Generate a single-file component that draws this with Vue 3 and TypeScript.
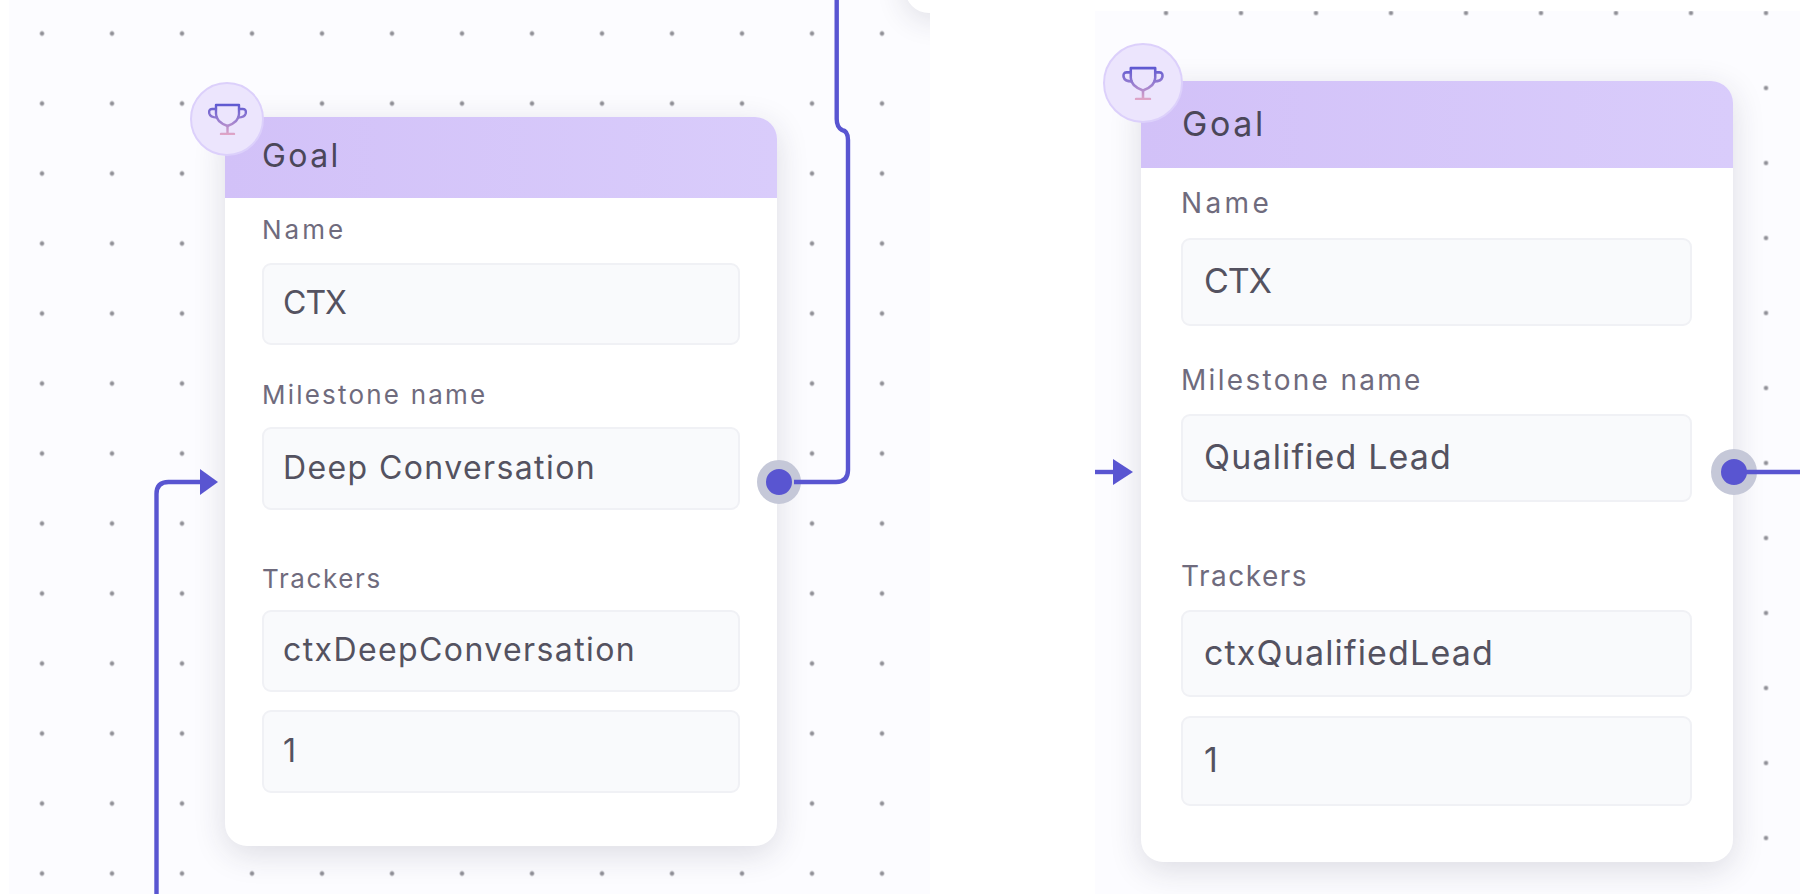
<script setup lang="ts">
interface GoalNode {
  id: string
  milestone: string
  tracker: string
}

const nodes: GoalNode[] = [
  { id: 'left', milestone: 'Deep Conversation', tracker: 'ctxDeepConversation' },
  { id: 'right', milestone: 'Qualified Lead', tracker: 'ctxQualifiedLead' },
]
</script>

<template>
  <main class="page">
    <section
      v-for="node in nodes"
      :key="node.id"
      class="canvas"
      :class="`canvas-${node.id}`"
    >
      <div v-if="node.id === 'left'" class="peek-node"></div>

      <svg class="wires" xmlns="http://www.w3.org/2000/svg">
        <template v-if="node.id === 'left'">
          <path class="wire" d="M827.7 0V119Q827.7 127 833 130Q839 131 839 140V470Q839 482 827 482H785" />
          <path class="wire" d="M147.5 894V494Q147.5 482 159.5 482H195" />
          <polygon class="arrow" points="191,469 209,482 191,495" />
        </template>
        <template v-else>
          <path class="wire" d="M0 461H22" />
          <polygon class="arrow" points="18,448 38,461 18,474" />
          <path class="wire" d="M650 461H705" />
        </template>
      </svg>

      <article class="card">
        <div class="badge">
          <svg class="trophy" viewBox="0 0 39 32" fill="none" xmlns="http://www.w3.org/2000/svg">
            <defs>
              <linearGradient :id="`cup-${node.id}`" x1="0" y1="0" x2="0" y2="32" gradientUnits="userSpaceOnUse">
                <stop offset="0" stop-color="#5955d1" />
                <stop offset="0.55" stop-color="#9a7fd0" />
                <stop offset="1" stop-color="#e2a6c6" />
              </linearGradient>
            </defs>
            <g :stroke="`url(#cup-${node.id})`" stroke-width="2.4" stroke-linecap="round" stroke-linejoin="round">
              <path d="M8 2H31V11C31 18 25 21 19.5 23C14 21 8 18 8 11Z" />
              <path d="M8 6H4C1.500 6 0.800 8 1.300 10.500C2 13.500 5 14.500 9 14.500" />
              <path d="M31 6H35C37.500 6 38.200 8 37.700 10.500C37 13.500 34 14.500 30 14.500" />
              <path d="M19.5 23V30" />
              <path d="M13 31H26" />
            </g>
          </svg>
        </div>

        <header class="card-head">Goal</header>

        <div class="card-body">
          <label class="label label-name">Name</label>
          <div class="value value-name">CTX</div>
          <label class="label label-milestone">Milestone name</label>
          <div class="value value-milestone">{{ node.milestone }}</div>
          <label class="label label-trackers">Trackers</label>
          <div class="value value-tracker">{{ node.tracker }}</div>
          <div class="value value-count">1</div>
        </div>

        <span class="handle"></span>
      </article>
    </section>
  </main>
</template>

<style scoped>
.page {
  display: flex;
  align-items: flex-start;
  width: 1800px;
  height: 894px;
  overflow: hidden;
  background: #ffffff;
  font-family: Inter, "Liberation Sans", sans-serif;
}

.canvas {
  position: relative;
  flex: none;
  overflow: hidden;
  background-color: #fcfcff;
  background-image: radial-gradient(circle, #8f8f96 0, #8f8f96 1.3px, rgba(143, 143, 150, 0) 3px);
}

.canvas-left {
  width: 921px;
  height: 894px;
  margin-left: 9px;
  background-size: 70px 70px;
  background-position: -2px -1.5px;
}

.canvas-right {
  width: 705px;
  height: 883px;
  margin-top: 11px;
  margin-left: 165px;
  background-size: 75px 75px;
  background-position: 33.5px -35.5px;
}

.peek-node {
  position: absolute;
  left: 896px;
  top: -87px;
  width: 120px;
  height: 100px;
  background: #ffffff;
  border-radius: 24px;
  box-shadow: 0 6px 30px rgba(40, 40, 70, 0.14);
}

.wires {
  position: absolute;
  inset: 0;
  width: 100%;
  height: 100%;
  z-index: 2;
}

.wire {
  fill: none;
  stroke: #5955d1;
  stroke-width: 4.4;
}

.arrow {
  fill: #5955d1;
}

.card {
  position: absolute;
  z-index: 1;
  display: flex;
  flex-direction: column;
  background: #ffffff;
  border-radius: 22px;
  box-shadow: 0 8px 32px rgba(40, 40, 70, 0.15);
}

.canvas-left .card {
  left: 216px;
  top: 117px;
  width: 552px;
  height: 729px;
}

.canvas-right .card {
  left: 46px;
  top: 70px;
  width: 592px;
  height: 781px;
}

.card-head {
  display: flex;
  align-items: center;
  border-radius: 22px 22px 0 0;
  background: linear-gradient(90deg, #d2c1f8 0%, #d9ccfb 100%);
  color: #4b4759;
  box-sizing: border-box;
}

.canvas-left .card-head {
  height: 81px;
  padding: 0 0 5px 37px;
  font-size: 32px;
  letter-spacing: 2.4px;
}

.canvas-right .card-head {
  height: 87px;
  padding: 0 0 3px 41px;
  font-size: 34px;
  letter-spacing: 2.6px;
}

.card-body {
  display: flex;
  flex-direction: column;
}

.canvas-left .card-body {
  padding: 0 37px 0 37px;
}

.canvas-right .card-body {
  padding: 0 41px 0 40px;
}

.label {
  display: block;
  height: 30px;
  line-height: 30px;
  color: #6f6b7d;
}

.canvas-left .label {
  font-size: 26px;
}

.canvas-right .label {
  font-size: 28px;
}

.canvas-left .label-name { letter-spacing: 3px; }
.canvas-left .label-milestone { letter-spacing: 2.2px; }
.canvas-left .label-trackers { letter-spacing: 1.6px; }
.canvas-right .label-name { letter-spacing: 3.4px; }
.canvas-right .label-milestone { letter-spacing: 2.3px; }
.canvas-right .label-trackers { letter-spacing: 1.5px; }

.value {
  display: flex;
  align-items: center;
  box-sizing: border-box;
  background: #f9fafc;
  border: 2px solid #f0f1f5;
  border-radius: 9px;
  color: #545260;
}

.canvas-left .value {
  padding: 0 0 3px 19px;
  font-size: 32px;
  letter-spacing: 1.4px;
}

.canvas-right .value {
  padding: 0 0 3px 21px;
  font-size: 34px;
  letter-spacing: 1.15px;
}

.canvas-left .value-name { letter-spacing: -1px; }
.canvas-right .value-name { letter-spacing: -1px; }

/* left node spacing */
.canvas-left .label-name { margin-top: 17px; }
.canvas-left .value-name { margin-top: 18px; height: 82px; }
.canvas-left .label-milestone { margin-top: 35px; }
.canvas-left .value-milestone { margin-top: 17px; height: 83px; }
.canvas-left .label-trackers { margin-top: 54px; }
.canvas-left .value-tracker { margin-top: 16px; height: 82px; }
.canvas-left .value-count { margin-top: 18px; height: 83px; }

/* right node spacing */
.canvas-right .label-name { margin-top: 20px; }
.canvas-right .value-name { margin-top: 20px; height: 88px; }
.canvas-right .label-milestone { margin-top: 39px; }
.canvas-right .value-milestone { margin-top: 19px; height: 88px; }
.canvas-right .label-trackers { margin-top: 59px; }
.canvas-right .value-tracker { margin-top: 19px; height: 87px; }
.canvas-right .value-count { margin-top: 19px; height: 90px; }

.badge {
  position: absolute;
  z-index: 3;
  display: flex;
  align-items: center;
  justify-content: center;
  box-sizing: border-box;
  border-radius: 50%;
  background: #ece5fd;
  border: 2px solid #dcd0fb;
}

.canvas-left .badge {
  left: -35px;
  top: -35px;
  width: 74px;
  height: 74px;
}

.canvas-right .badge {
  left: -38px;
  top: -38px;
  width: 80px;
  height: 80px;
}

.trophy {
  display: block;
}

.canvas-left .trophy {
  width: 39px;
  height: 32px;
}

.canvas-right .trophy {
  width: 42px;
  height: 34px;
}

.handle {
  position: absolute;
  z-index: 3;
  box-sizing: border-box;
  border-radius: 50%;
  background: #5955d1;
}

.canvas-left .handle {
  left: 532px;
  top: 343px;
  width: 44px;
  height: 44px;
  border: 9px solid #c5c8d8;
}

.canvas-right .handle {
  left: 570px;
  top: 368px;
  width: 46px;
  height: 46px;
  border: 10px solid #c5c8d8;
}
</style>
